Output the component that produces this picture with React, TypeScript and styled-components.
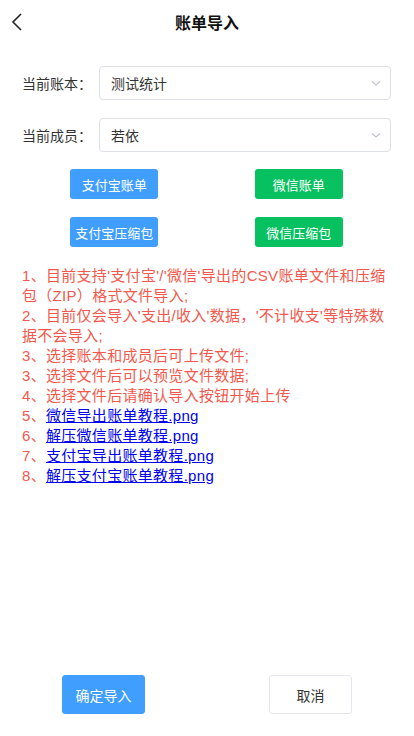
import React from 'react';
import styled, { createGlobalStyle } from 'styled-components';

const GlobalStyle = createGlobalStyle`
  html, body {
    margin: 0;
    padding: 0;
    background: #ffffff;
  }
  body {
    font-family: "Liberation Sans", "Noto Sans CJK SC", sans-serif;
    color: #303133;
  }
`;

const tips = [
  "1、目前支持'支付宝'/'微信'导出的CSV账单文件和压缩包（ZIP）格式文件导入;",
  "2、目前仅会导入'支出/收入'数据，'不计收支'等特殊数据不会导入;",
  '3、选择账本和成员后可上传文件;',
  '3、选择文件后可以预览文件数据;',
  '4、选择文件后请确认导入按钮开始上传',
];

const links = [
  { no: '5、', name: '微信导出账单教程.png' },
  { no: '6、', name: '解压微信账单教程.png' },
  { no: '7、', name: '支付宝导出账单教程.png' },
  { no: '8、', name: '解压支付宝账单教程.png' },
];

const App: React.FC = () => {
  return (
    <Page>
      <GlobalStyle />
      <Header>
        <BackButton>
          <svg width="12" height="20" viewBox="0 0 12 20" fill="none">
            <path d="M10 2L2 10L10 18" stroke="#222" strokeWidth="1.6" />
          </svg>
        </BackButton>
        <Title>账单导入</Title>
      </Header>

      <FormRow>
        <Label>当前账本：</Label>
        <Select>
          <span>测试统计</span>
          <Chevron />
        </Select>
      </FormRow>
      <FormRow>
        <Label>当前成员：</Label>
        <Select>
          <span>若依</span>
          <Chevron />
        </Select>
      </FormRow>

      <ButtonGrid>
        <UploadButton $color="#409eff">支付宝账单</UploadButton>
        <UploadButton $color="#07c160">微信账单</UploadButton>
        <UploadButton $color="#409eff">支付宝压缩包</UploadButton>
        <UploadButton $color="#07c160">微信压缩包</UploadButton>
      </ButtonGrid>

      <TipList>
        {tips.map((t, i) => (
          <Tip key={i}>{t}</Tip>
        ))}
        {links.map((l) => (
          <Tip key={l.no}>
            {l.no}
            <TipLink href="#">{l.name}</TipLink>
          </Tip>
        ))}
      </TipList>

      <Footer>
        <FooterButton $primary>确定导入</FooterButton>
        <FooterButton>取消</FooterButton>
      </Footer>
    </Page>
  );
};

const Chevron: React.FC = () => (
  <svg width="12" height="8" viewBox="0 0 12 8" fill="none">
    <path d="M2 2.5L6 6L10 2.5" stroke="#c0c4cc" strokeWidth="1.1" />
  </svg>
);

export default App;

const Page = styled.div`
  display: flex;
  flex-direction: column;
  min-height: 100vh;
  box-sizing: border-box;
`;

const Header = styled.div`
  height: 44px;
  display: flex;
  align-items: center;
  justify-content: center;
  position: relative;
`;

const BackButton = styled.div`
  position: absolute;
  left: 11px;
  top: 12px;
  display: flex;
`;

const Title = styled.div`
  font-size: 16px;
  font-weight: bold;
  color: #111;
`;

const FormRow = styled.div`
  display: flex;
  align-items: center;
  padding: 0 23px 0 22px;
  margin-top: 22px;

  & + & {
    margin-top: 18px;
  }
`;

const Label = styled.div`
  width: 77px;
  font-size: 14px;
  color: #333;
`;

const Select = styled.div`
  flex: 1;
  height: 34px;
  box-sizing: border-box;
  border: 1px solid #dcdfe6;
  border-radius: 4px;
  display: flex;
  align-items: center;
  justify-content: space-between;
  padding: 0 8px 0 11px;
  font-size: 14px;
  color: #333;
`;

const ButtonGrid = styled.div`
  display: grid;
  grid-template-columns: 1fr 1fr;
  row-gap: 18px;
  padding: 0 23px 0 22px;
  margin-top: 17px;
  justify-items: center;
`;

const UploadButton = styled.div<{ $color: string }>`
  width: 88px;
  height: 30px;
  border-radius: 3px;
  background: ${(p) => p.$color};
  color: #fff;
  font-size: 13px;
  display: flex;
  align-items: center;
  justify-content: center;
`;

const TipList = styled.div`
  margin-top: 19px;
  padding: 0 24px 0 22px;
  font-size: 15px;
  line-height: 20px;
  letter-spacing: 0.3px;
  color: #f4584c;
`;

const Tip = styled.div``;

const TipLink = styled.a`
  color: #0000ee;
  text-decoration: underline;
`;

const Footer = styled.div`
  margin-top: auto;
  display: grid;
  grid-template-columns: 1fr 1fr;
  justify-items: center;
  padding-bottom: 22px;
`;

const FooterButton = styled.div<{ $primary?: boolean }>`
  width: 83px;
  height: 39px;
  box-sizing: border-box;
  border-radius: 3px;
  display: flex;
  align-items: center;
  justify-content: center;
  font-size: 14px;
  background: ${(p) => (p.$primary ? '#409eff' : '#fff')};
  color: ${(p) => (p.$primary ? '#fff' : '#333')};
  border: 1px solid ${(p) => (p.$primary ? '#409eff' : '#e4e7ed')};
`;
